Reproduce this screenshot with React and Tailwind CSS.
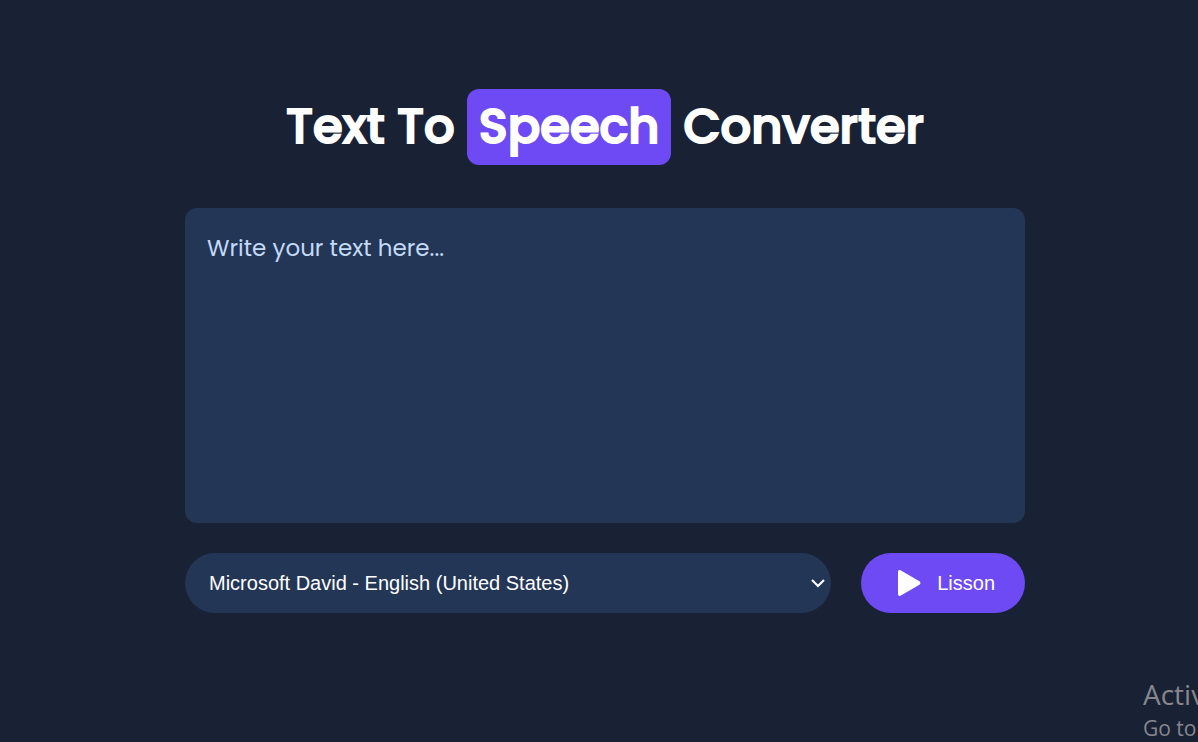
import React, { useState } from "react";

const voices = ["Microsoft David - English (United States)"];

function Heading() {
  return (
    <h1 className="flex flex-wrap items-center justify-center gap-3 font-['Poppins','Inter',sans-serif] text-5xl font-medium whitespace-nowrap text-white [-webkit-text-stroke:2px_#fff]">
      <span>Text To</span>
      <span className="flex h-19 items-center rounded-xl bg-[#6d4af3] px-3">Speech</span>
      <span>Converter</span>
    </h1>
  );
}

function VoiceSelect() {
  return (
    <div className="relative min-w-0 flex-1">
      <select
        aria-label="Voice"
        className="h-15 w-full cursor-pointer appearance-none rounded-full bg-[#233656] pr-12 pl-6 font-['Liberation_Sans',sans-serif] text-xl text-white outline-none"
      >
        {voices.map((v) => (
          <option key={v}>{v}</option>
        ))}
      </select>
      <svg
        className="pointer-events-none absolute top-6 right-1.5 h-3 w-3.5"
        viewBox="0 0 14 12"
        fill="none"
        stroke="#fff"
        strokeWidth="2.1"
        aria-hidden="true"
      >
        <path d="M1 3 7 9 13 3" />
      </svg>
    </div>
  );
}

export default function App() {
  const [text, setText] = useState("");

  return (
    <div className="relative min-h-screen overflow-hidden bg-[#192135]">
      <main className="flex min-h-screen flex-col items-center pt-[89px] pr-6 pb-10 pl-9">
        <Heading />
        <div className="mt-[43px] flex w-full max-w-[840px] flex-col gap-[30px]">
          <textarea
            aria-label="Text to convert"
            placeholder="Write your text here..."
            value={text}
            onChange={(e) => setText(e.target.value)}
            className="block h-[315px] w-full resize-none rounded-xl bg-[#233656] px-[22px] py-6 font-['Poppins','Inter',sans-serif] text-[23px] leading-8 text-white outline-none placeholder:text-[#c2d9f7]"
          />
          <div className="flex gap-[30px]">
            <VoiceSelect />
            <button
              type="button"
              className="flex h-15 cursor-pointer items-center gap-4 rounded-full bg-[#6d4af3] pr-[30px] pl-9 font-['Liberation_Sans',sans-serif] text-xl text-white"
            >
              <svg className="h-[26px] w-6" viewBox="0 0 24 26" fill="#fff" aria-hidden="true">
                <path d="M1 2C1 .3 2.6-.4 4 .5L22.4 11.2C23.8 12.1 23.8 13.9 22.4 14.8L4 25.5C2.6 26.4 1 25.7 1 24Z" />
              </svg>
              Lisson
            </button>
          </div>
        </div>
      </main>
      <div className="pointer-events-none absolute right-0 bottom-0 h-[66px] w-[55px] overflow-hidden font-['Open_Sans',sans-serif] whitespace-nowrap text-[#85878d]">
        <p className="text-[28px] leading-9">Activ</p>
        <p className="text-[21px] leading-8">Go to</p>
      </div>
    </div>
  );
}
